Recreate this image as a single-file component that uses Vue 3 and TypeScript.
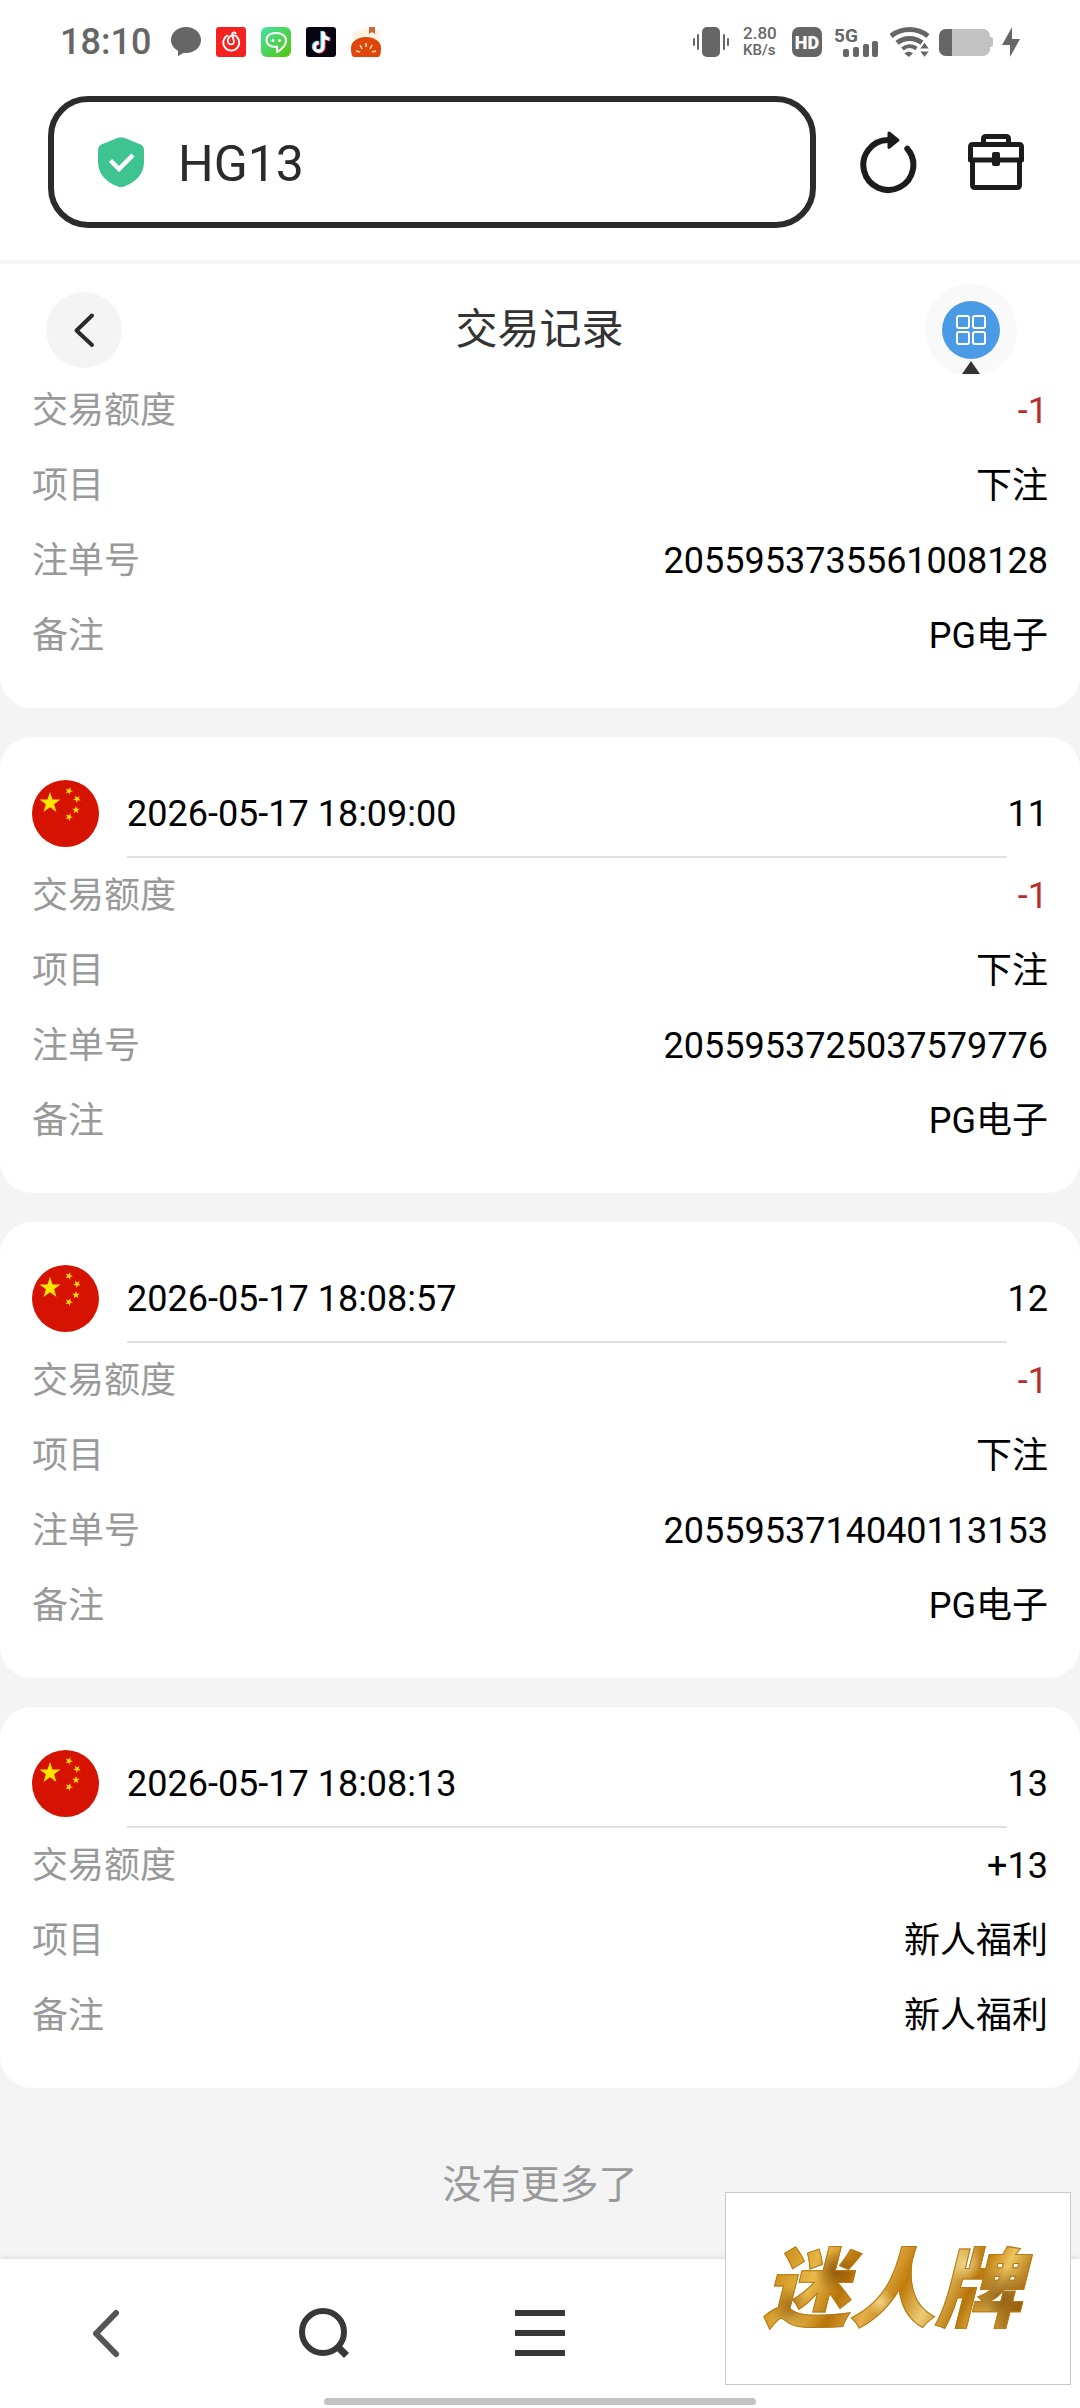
<script setup lang="ts">
import { ref } from 'vue'

interface Row {
  label: string
  value: string
  negative?: boolean
}

interface RecordItem {
  time?: string
  balance?: string
  rows: Row[]
}

const address = ref('HG13')

const betRows = (orderNo: string): Row[] => [
  { label: '交易额度', value: '-1', negative: true },
  { label: '项目', value: '下注' },
  { label: '注单号', value: orderNo },
  { label: '备注', value: 'PG电子' },
]

const records: RecordItem[] = [
  { rows: betRows('2055953735561008128') },
  { time: '2026-05-17 18:09:00', balance: '11', rows: betRows('2055953725037579776') },
  { time: '2026-05-17 18:08:57', balance: '12', rows: betRows('2055953714040113153') },
  {
    time: '2026-05-17 18:08:13',
    balance: '13',
    rows: [
      { label: '交易额度', value: '+13' },
      { label: '项目', value: '新人福利' },
      { label: '备注', value: '新人福利' },
    ],
  },
]

// Points of a five-pointed star centred on (cx, cy), turned by `turn` degrees.
function star(cx: number, cy: number, r: number, turn = 0): string {
  return Array.from({ length: 10 }, (_, i) => {
    const radius = i % 2 ? r * 0.39 : r
    const angle = ((i * 36 - 90 + turn) * Math.PI) / 180
    return `${(cx + radius * Math.cos(angle)).toFixed(2)},${(cy + radius * Math.sin(angle)).toFixed(2)}`
  }).join(' ')
}

const stars = [
  star(18, 23, 11),
  star(37, 11, 4, 20),
  star(45, 19, 4, 40),
  star(44, 30, 4, 0),
  star(37, 37, 4, 22),
]
</script>

<template>
  <div class="page">
    <div class="status">
      <div class="status-left">
        <span class="clock">18:10</span>
        <svg width="30" height="30" viewBox="0 0 30 30" aria-hidden="true">
          <path d="M15 0C6.500 0 0 5.800 0 13c0 4.500 2.700 8.400 7 10.700V29l6-3.200c.7.100 1.300.2 2 .2 8.500 0 15-5.800 15-13S23.500 0 15 0z" fill="#666" />
        </svg>
        <svg width="30" height="30" viewBox="0 0 30 30" aria-hidden="true">
          <rect width="30" height="30" rx="3" fill="#f5221f" />
          <path d="M11.500 8.500a8 8 0 1 0 7.500 0c-1.500-.5-3.200-.4-4.400.6-2.300 1.500-3.300 4.300-2.300 6.700 1.100 2.300 4.900 2.200 5.600-.4.500-1.700-1.700-5.900-1.800-8 0-1.800 2-2.500 3.600-1.200" fill="none" stroke="#fff" stroke-width="1.800" stroke-linecap="round" />
        </svg>
        <svg width="30" height="30" viewBox="0 0 30 30" aria-hidden="true">
          <defs>
            <linearGradient id="chat-green" x1="0" y1="0" x2="1" y2="1">
              <stop offset="0" stop-color="#46e0a8" />
              <stop offset="1" stop-color="#52c70a" />
            </linearGradient>
          </defs>
          <rect width="30" height="30" rx="6" fill="url(#chat-green)" />
          <path d="M16 19.500c-6 1-10.500-2-10.500-6.500S9.500 6 15 6s10 2.800 10 7c0 5-3.500 9-9 12z" fill="none" stroke="#fff" stroke-width="2" stroke-linejoin="round" />
          <circle cx="12" cy="13.500" r="1.500" fill="#fff" />
          <circle cx="18.500" cy="13.500" r="1.500" fill="#fff" />
        </svg>
        <svg width="30" height="30" viewBox="0 0 30 30" aria-hidden="true">
          <rect width="30" height="30" rx="3" fill="#080512" />
          <g fill="none" stroke-width="3.400">
            <path d="M16 4v15.500a4.300 4.300 0 1 1-4.300-4.300M16 5c.5 4 3.200 6.300 6.500 6.500" stroke="#25e5e8" />
            <path d="M18 5v15.500a4.300 4.300 0 1 1-4.300-4.300M18 6c.5 4 3.200 6.300 6.500 6.500" stroke="#f5264f" />
            <path d="M17 4.500V20a4.300 4.300 0 1 1-4.300-4.300M17 5.500c.5 4 3.200 6.300 6.500 6.500" stroke="#fff" />
          </g>
        </svg>
        <svg width="30" height="30" viewBox="0 0 30 30" aria-hidden="true">
          <path d="M2 5l13-4 14 3v9H2z" fill="#fff3e3" />
          <path d="M18 0h6v7l-3-2-3 2z" fill="#c96a35" />
          <path d="M0 21C0 14 7 10 15 10s15 4 15 11c0 6-1 9-3 9H3c-2 0-3-3-3-9z" fill="#e0460b" />
          <path d="M15 16v4M9 18l2 4M21 18l-2 4M5 24l4 1M25 24l-4 1" stroke="#ffe3b0" stroke-width="1.600" />
        </svg>
      </div>

      <div class="status-right">
        <svg width="42" height="30" viewBox="0 0 42 30" fill="#666" aria-hidden="true">
          <rect x="10" width="18" height="30" rx="5" />
          <rect x="5" y="7" width="2" height="16" rx="1" />
          <rect x="1" y="11" width="2" height="8" rx="1" />
          <rect x="31" y="7" width="2" height="16" rx="1" />
          <rect x="35" y="11" width="2" height="8" rx="1" />
        </svg>
        <div class="speed">
          <span class="speed-value">2.80</span>
          <span class="speed-unit">KB/s</span>
        </div>
        <svg width="33" height="30" viewBox="0 0 33 30" aria-hidden="true">
          <rect width="30" height="30" rx="7" fill="#666" />
          <text x="15" y="22" text-anchor="middle" font-family="Roboto, sans-serif" font-size="18" font-weight="900" fill="#fff">HD</text>
        </svg>
        <svg class="signal" width="47" height="30" viewBox="0 0 47 30" fill="#666" aria-hidden="true">
          <text x="0" y="15" font-family="Roboto, sans-serif" font-size="19" font-weight="700">5G</text>
          <rect x="9" y="22" width="6" height="8" rx="2" />
          <rect x="19" y="20" width="6" height="10" rx="2" />
          <rect x="29" y="17" width="6" height="13" rx="2" />
          <rect x="38" y="14" width="6" height="16" rx="2" />
        </svg>
        <svg width="40" height="30" viewBox="0 0 40 30" aria-hidden="true">
          <g fill="none" stroke="#666" stroke-width="5">
            <path d="M1 9C12 .4 27 .4 38 9" />
            <path d="M7 15.800c7.500-5.800 17.500-5.800 25 0" />
            <path d="M12.500 22c4-3.500 9.500-3.700 14-.5" stroke-width="4" />
          </g>
          <path d="M14.500 26.500c2.500-2.200 6-2.200 8.500 0L18.800 30z" fill="#666" />
          <path d="M34.500 15l5 7h-10zM34.500 30.500l5-6.500h-10z" fill="#666" stroke="#fff" stroke-width="1" />
        </svg>
        <svg width="54" height="27" viewBox="0 0 54 27" aria-hidden="true">
          <path d="M7 0h37a7 7 0 0 1 7 7v1h1a2 2 0 0 1 2 2v6a2 2 0 0 1-2 2h-1v2a7 7 0 0 1-7 7H7a7 7 0 0 1-7-7V7a7 7 0 0 1 7-7z" fill="#c2c2c2" />
          <path d="M13 0H7a7 7 0 0 0-7 7v13a7 7 0 0 0 7 7h6z" fill="#666" />
        </svg>
        <svg width="18" height="30" viewBox="0 0 18 30" aria-hidden="true">
          <path d="M10 0v12h8L8 30V18H0z" fill="#666" />
        </svg>
      </div>
    </div>

    <div class="browser-bar">
      <label class="address">
        <svg width="46" height="50" viewBox="0 0 46 50" aria-hidden="true">
          <path d="M20 .8q3-1.200 6 0l16 6.400q4 1.800 4 5.800v12c0 12-8 20-20 24.500q-3 1-6 0C8 45 0 37 0 25V13q0-4 4-5.800z" fill="#3ec490" />
          <path d="M12.500 23.500l8.500 8.500 14-14" fill="none" stroke="#fff" stroke-width="4.500" />
        </svg>
        <input v-model="address" class="address-input" type="text" aria-label="地址" />
      </label>
      <div class="browser-actions">
        <button class="icon-button" type="button" aria-label="刷新">
          <svg width="60" height="64" viewBox="0 0 60 64">
            <path d="M32 10h-2a25 25 0 1 0 19.300 8.700" fill="none" stroke="#1c1c1c" stroke-width="6" stroke-linecap="round" />
            <path d="M31 3l9 7.200-9 7.200z" fill="#1c1c1c" stroke="#1c1c1c" stroke-width="3" stroke-linejoin="round" />
          </svg>
        </button>
        <button class="icon-button" type="button" aria-label="工具箱">
          <svg width="60" height="60" viewBox="0 0 60 60" fill="none" stroke="#1c1c1c" stroke-width="5" stroke-linejoin="round">
            <path d="M17.500 11V7q0-2.500 2.500-2.500h20q2.500 0 2.500 2.500v4" />
            <path d="M4.500 28V15q0-2.500 2.500-2.500h46q2.500 0 2.500 2.500v13z" />
            <path d="M6.500 28v25q0 2.500 2.500 2.500h42q2.500 0 2.500-2.500V28" />
            <rect x="26" y="20" width="8" height="14" rx="2" fill="#1c1c1c" stroke="none" />
          </svg>
        </button>
      </div>
    </div>

    <header class="app-bar">
      <button class="back" type="button" aria-label="返回">
        <svg width="76" height="76" viewBox="0 0 76 76">
          <path d="M46 23.500L30.500 38.500 46 53" fill="none" stroke="#2b2b2b" stroke-width="4" stroke-linecap="round" stroke-linejoin="round" />
        </svg>
      </button>
      <h1 class="title">交易记录</h1>
      <button class="menu-button" type="button" aria-label="菜单">
        <svg width="92" height="92" viewBox="0 0 92 92">
          <circle cx="46" cy="46" r="46" fill="#f9f9f9" />
          <circle cx="46" cy="46" r="29" fill="#4a9ae6" />
          <g fill="none" stroke="#fff" stroke-width="2">
            <rect x="32" y="32" width="12" height="12" rx="2" />
            <rect x="48" y="32" width="12" height="12" rx="2" />
            <rect x="32" y="48" width="12" height="12" rx="2" />
            <rect x="48" y="48" width="12" height="12" rx="2" />
          </g>
          <path d="M46 77l9 13H37z" fill="#333" />
        </svg>
      </button>
    </header>

    <main class="records">
      <article v-for="(item, index) in records" :key="index" class="card">
        <div v-if="item.time" class="card-head">
          <svg class="flag" width="67" height="67" viewBox="0 0 67 67" role="img" aria-label="CNY">
            <circle cx="33.500" cy="33.500" r="33.500" fill="#d61200" />
            <polygon v-for="points in stars" :key="points" :points="points" fill="#ffe500" />
          </svg>
          <time class="card-time">{{ item.time }}</time>
          <span class="card-balance">{{ item.balance }}</span>
        </div>
        <dl class="rows">
          <div v-for="row in item.rows" :key="row.label" class="row">
            <dt>{{ row.label }}</dt>
            <dd :class="{ negative: row.negative }">{{ row.value }}</dd>
          </div>
        </dl>
      </article>
      <p class="end">没有更多了</p>
    </main>

    <nav class="bottom-nav">
      <button class="icon-button" type="button" aria-label="后退">
        <svg width="50" height="50" viewBox="0 0 50 50">
          <path d="M33 5L13 25.500 33 46" fill="none" stroke="#555" stroke-width="6" stroke-linecap="round" stroke-linejoin="round" />
        </svg>
      </button>
      <button class="icon-button" type="button" aria-label="搜索">
        <svg width="50" height="50" viewBox="0 0 50 50">
          <circle cx="24" cy="24" r="21" fill="none" stroke="#383838" stroke-width="6" />
          <path d="M39 39l8.500 8.500" stroke="#383838" stroke-width="7" />
        </svg>
      </button>
      <button class="icon-button" type="button" aria-label="更多">
        <svg width="50" height="46" viewBox="0 0 50 46" fill="#383838">
          <rect width="50" height="6" />
          <rect y="20" width="50" height="6" />
          <rect y="40" width="50" height="6" />
        </svg>
      </button>
      <span class="home-indicator"></span>
    </nav>

    <aside class="brand"><span class="brand-text">迷人牌</span></aside>
  </div>
</template>

<style>
body {
  margin: 0;
  background: #f4f4f4;
}
</style>

<style scoped>
.page {
  position: relative;
  display: flex;
  flex-direction: column;
  min-height: 100vh;
  background: #f4f4f4;
  color: #000;
  font-family: Roboto, "Noto Sans CJK SC", sans-serif;
  font-size: 36px;
  line-height: 48px;
}

svg {
  display: block;
  flex: none;
}

button {
  padding: 0;
  border: 0;
  background: none;
  cursor: pointer;
}

.status {
  display: flex;
  align-items: center;
  justify-content: space-between;
  height: 84px;
  padding: 0 60px;
  background: #fff;
  color: #666;
}

.status-left {
  display: flex;
  align-items: center;
  gap: 15px;
}

.clock {
  margin-right: 5px;
  font-weight: 500;
}

.status-right {
  display: flex;
  align-items: center;
  gap: 9px;
}

.signal {
  overflow: visible;
}

.speed {
  display: flex;
  flex-direction: column;
  width: 40px;
  font-weight: 500;
  line-height: 17px;
}

.speed-value {
  font-size: 17px;
}

.speed-unit {
  font-size: 15px;
}

.browser-bar {
  display: flex;
  align-items: center;
  gap: 42px;
  padding: 12px 54px 32px 48px;
  background: #fff;
  border-bottom: 4px solid #f5f5f5;
}

.address {
  display: flex;
  flex: 1;
  align-items: center;
  gap: 34px;
  box-sizing: border-box;
  min-width: 0;
  height: 132px;
  padding: 0 44px;
  border: 6px solid #2b2b2b;
  border-radius: 40px;
}

.address-input {
  flex: 1;
  min-width: 0;
  padding: 3px 0 0;
  border: 0;
  outline: 0;
  background: none;
  color: #2b2b2b;
  font-family: inherit;
  font-size: 50px;
  line-height: 60px;
}

.browser-actions {
  display: flex;
  align-items: center;
  gap: 48px;
}

.icon-button {
  display: flex;
  align-items: center;
  justify-content: center;
}

.app-bar {
  display: flex;
  align-items: center;
  justify-content: space-between;
  box-sizing: border-box;
  height: 123px;
  padding: 8px 63px 0 46px;
  background: #fff;
}

.back {
  margin-right: 32px;
  border-radius: 50%;
  background: #f4f4f4;
}

.title {
  margin: 0;
  color: #333;
  font-size: 42px;
  font-weight: 400;
}

.records {
  display: flex;
  flex-direction: column;
  gap: 29px;
}

.card {
  padding: 0 32px 48px;
  border-radius: 32px;
  background: #fff;
}

.card:first-child {
  border-top-left-radius: 0;
  border-top-right-radius: 0;
}

.card-head {
  position: relative;
  display: flex;
  align-items: center;
  gap: 28px;
  margin-bottom: 14px;
  padding: 43px 0 11px;
}

.card-head::after {
  content: "";
  position: absolute;
  right: 41px;
  bottom: 0;
  left: 95px;
  height: 2px;
  background: #e0e0e0;
}

.card-balance {
  margin-left: auto;
}

.rows {
  display: flex;
  flex-direction: column;
  gap: 27px;
  margin: 0;
}

.row {
  display: flex;
  justify-content: space-between;
}

dt {
  color: #999;
}

dd {
  margin: 0;
}

.negative {
  color: #b92c30;
}

.end {
  margin: 0;
  padding: 38px 0;
  color: #999;
  font-size: 39px;
  line-height: 60px;
  text-align: center;
}

.bottom-nav {
  position: relative;
  display: grid;
  grid-template-columns: repeat(5, 1fr);
  box-sizing: border-box;
  height: 149px;
  margin-top: auto;
  padding-bottom: 2px;
  background: #fff;
  box-shadow: 0 -1px 6px rgba(0, 0, 0, 0.1);
}

.home-indicator {
  position: absolute;
  bottom: 3px;
  left: 30%;
  width: 40%;
  height: 7px;
  border-radius: 4px;
  background: #c2c2c2;
}

.brand {
  position: absolute;
  right: 9px;
  bottom: 23px;
  display: flex;
  align-items: center;
  justify-content: center;
  box-sizing: border-box;
  width: 346px;
  height: 193px;
  padding: 0 12px 12px 0;
  border: 1px solid #c8c8c8;
  background: #fff;
}

.brand-text {
  padding: 0 12px;
  background:
    radial-gradient(circle at 14% 70%, rgba(120, 66, 0, 0.6) 0, transparent 8%),
    radial-gradient(circle at 30% 40%, rgba(120, 66, 0, 0.7) 0, transparent 10%),
    radial-gradient(circle at 62% 48%, rgba(130, 72, 0, 0.6) 0, transparent 8%),
    radial-gradient(circle at 88% 62%, rgba(110, 60, 0, 0.7) 0, transparent 12%),
    radial-gradient(circle at 46% 66%, rgba(255, 236, 170, 0.7) 0, transparent 8%),
    radial-gradient(circle at 76% 34%, rgba(255, 236, 170, 0.7) 0, transparent 8%),
    linear-gradient(115deg, #a86a08 0%, #c98a14 12%, #e8b94c 26%, #b87408 36%, #e3b04a 46%, #c07c0c 54%, #eccb74 63%, #b87408 74%, #edc55c 82%, #a05f04 92%, #d69a26 100%);
  background-clip: text;
  -webkit-background-clip: text;
  color: transparent;
  font-family: "Noto Sans CJK SC", sans-serif;
  font-size: 86px;
  font-style: italic;
  font-weight: 900;
  line-height: 120px;
  -webkit-text-stroke: 1px #b57a14;
}
</style>
